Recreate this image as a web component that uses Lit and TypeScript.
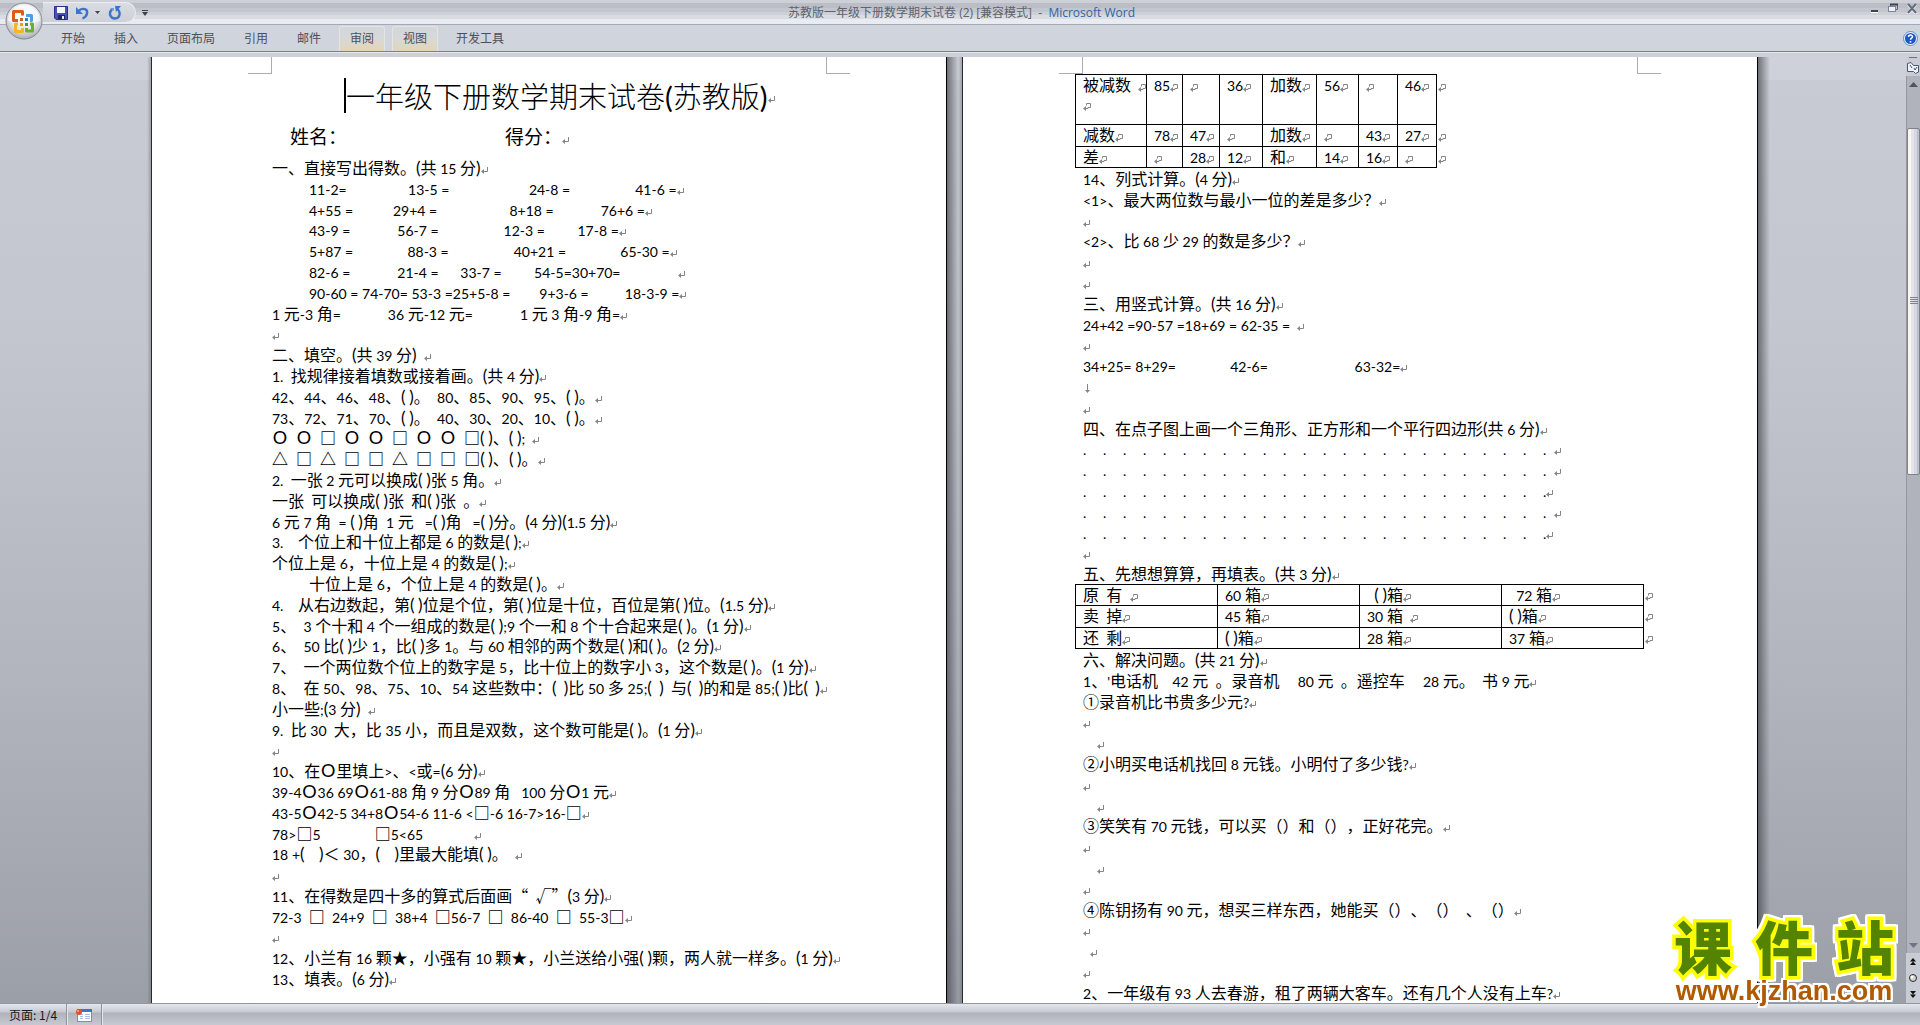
import { LitElement, html, svg, css, TemplateResult } from "lit";
import { customElement, property } from "lit/decorators.js";
import { classMap } from "lit/directives/class-map.js";

/* ---------- text helpers ---------- */

const paraMark = html`<svg class="mark" width="8" height="8" viewBox="0 0 8 8" aria-hidden="true">
  <path d="M6.500 0V4.500H1.500" fill="none" stroke="#858585" />
  <path d="M0 4.500L3 2V7Z" fill="#858585" />
</svg>`;

const cellMark = html`<svg class="mark" width="8" height="8" viewBox="0 0 8 8" aria-hidden="true">
  <path d="M3.500 2.500V.5H7.500V4.500H5V5.500H2" fill="none" stroke="#858585" />
  <path d="M0 5.500L3 3V8Z" fill="#858585" />
</svg>`;

const breakMark = html`<svg class="mark" width="8" height="10" viewBox="0 0 8 10" aria-hidden="true">
  <path d="M4.500 0V7" fill="none" stroke="#858585" />
  <path d="M2 6H7L4.500 9Z" fill="#858585" />
</svg>`;

/* Splits a string into Latin, bracket, shape, blank and ideographic runs, each with its own face. */
function runs(text: string): TemplateResult[] {
  const parts = text.match(/[()]+|[\x21-\x27\x2a-\x7e]+| +|○|[□△]+|[^\x20-\x7e○□△]+/g) ?? [];
  return parts.map((part) => {
    if (part === "○") return html`<span class="ring">O</span>`;
    if (part[0] === "□" || part[0] === "△") return html`<span class="shape">${part}</span>`;
    if (part[0] === " ") return html`<span class="sp">${part}</span>`;
    if (part[0] === "(" || part[0] === ")") return html`<span class="par">${part}</span>`;
    if (part.charCodeAt(0) < 127) return html`<span class="lat">${part}</span>`;
    return html`${part}`;
  });
}

const textStyles = css`
  .lat,
  .par {
    font-family: Lato, "Liberation Sans", sans-serif;
    font-size: 14px;
    font-weight: 400;
    line-height: 1;
  }
  .par {
    font-size: 17px;
  }
  .sp {
    font-family: "Liberation Sans", sans-serif;
    font-size: 13px;
    line-height: 1;
  }
  .shape {
    font-weight: 700;
  }
  .ring {
    display: inline-block;
    width: 16px;
    font-family: Lato, sans-serif;
    font-size: 18px;
    line-height: 1;
    text-align: center;
  }
  .mark {
    vertical-align: -1px;
  }
`;

/* ---------- one paragraph ---------- */

@customElement("doc-line")
class DocLine extends LitElement {
  @property() text = "";
  @property({ type: Boolean }) indent = false;
  @property({ type: Boolean, attribute: "soft-break" }) softBreak = false;
  @property({ attribute: false }) shapes: string[] = [];

  static styles = [
    textStyles,
    css`
      :host {
        display: block;
      }
      .line {
        margin: 0;
        height: 1.3em;
        line-height: 1.3;
        white-space: pre;
      }
      .indent {
        padding-left: 37px;
      }
      .shapes {
        display: flex;
        gap: 8px;
      }
    `,
  ];

  render() {
    if (this.shapes.length) {
      return html`<p class="line shapes">
        ${this.shapes.map((s, i) => html`<span>${runs(s)}${i === this.shapes.length - 1 ? paraMark : ""}</span>`)}
      </p>`;
    }
    return html`<p class=${classMap({ line: true, indent: this.indent })}>${runs(this.text)}${this.softBreak ? breakMark : paraMark}</p>`;
  }
}

@customElement("dot-row")
class DotRow extends LitElement {
  @property({ type: Boolean }) spaced = false;

  static styles = [
    textStyles,
    css`
      :host {
        display: block;
      }
      .dots {
        display: flex;
        gap: 16px;
        height: 1.3em;
        margin: 0;
        line-height: 1.3;
        white-space: pre;
      }
      .dot {
        flex: 0 0 4px;
      }
    `,
  ];

  render() {
    const tail = this.spaced ? "  " : "";
    return html`<p class="dots">
      ${Array.from({ length: 24 }, (_, i) => html`<span class="dot"><span class="lat">.</span>${i === 23 ? html`${runs(tail)}${paraMark}` : ""}</span>`)}
    </p>`;
  }
}

/* ---------- tables ---------- */

@customElement("doc-table")
class DocTable extends LitElement {
  @property({ attribute: false }) rows: string[][] = [];
  @property() kind = "wide";

  static styles = [
    textStyles,
    css`
      :host {
        display: block;
        margin-left: -8px;
      }
      table {
        border-collapse: collapse;
        table-layout: fixed;
      }
      td {
        box-sizing: border-box;
        height: 21px;
        padding: 0 0 0 7px;
        border: 1px solid #000;
        line-height: 19px;
        vertical-align: top;
        white-space: pre;
      }
      td.end {
        width: 16px;
        padding-left: 1px;
        border: 0;
      }
      .wide {
        width: 584px;
      }
      .sums {
        width: 377px;
      }
      .sums tr:first-child td {
        height: 50px;
      }
      tr:nth-child(2) td {
        height: 22px;
      }
      .row-break {
        display: block;
      }
      .w71 { width: 71px; }
      .w36 { width: 36px; }
      .w37 { width: 37px; }
      .w43 { width: 43px; }
      .w54 { width: 54px; }
      .w42 { width: 42px; }
      .w39 { width: 39px; }
      .w142 { width: 142px; }
    `,
  ];

  render() {
    const widths = this.kind === "sums" ? [71, 36, 37, 43, 54, 42, 39, 39] : [142, 142, 142, 142];
    return html`<table class=${this.kind}>
      <tbody>
        ${this.rows.map(
          (row) => html`<tr>
            ${row.map((cell, i) => html`<td class="w${widths[i]}">${cell.split("\n").map((t) => html`<span class="row-break">${runs(t)}${cellMark}</span>`)}</td>`)}
            <td class="end">${cellMark}</td>
          </tr>`
        )}
      </tbody>
    </table>`;
  }
}

/* ---------- content ---------- */

type Line = string | { text?: string; indent?: boolean; softBreak?: boolean; shapes?: string[] };

const pageOne: Line[] = [
  "一、直接写出得数。(共 15 分)",
  { indent: true, text: "11-2=                 13-5 =                      24-8 =                  41-6 =" },
  { indent: true, text: "4+55 =           29+4 =                    8+18 =             76+6 =" },
  { indent: true, text: "43-9 =             56-7 =                  12-3 =         17-8 =" },
  { indent: true, text: "5+87 =               88-3 =                  40+21 =               65-30 =" },
  { indent: true, text: "82-6 =             21-4 =      33-7 =         54-5=30+70=                " },
  { indent: true, text: "90-60 = 74-70= 53-3 =25+5-8 =        9+3-6 =          18-3-9 =" },
  "1 元-3 角=             36 元-12 元=             1 元 3 角-9 角=",
  "",
  "二、填空。(共 39 分)  ",
  "1.  找规律接着填数或接着画。(共 4 分)",
  "42、44、46、48、( )。  80、85、90、95、( )。",
  "73、72、71、70、( )。  40、30、20、10、( )。",
  { shapes: ["○", "○", "□", "○", "○", "□", "○", "○", "□( )、( );  "] },
  { shapes: ["△", "□", "△", "□", "□", "△", "□", "□", "□( )、( )。"] },
  "2.  一张 2 元可以换成( )张 5 角。",
  "一张  可以换成( )张  和( )张  。",
  "6 元 7 角  = ( )角  1 元   =( )角   =( )分。(4 分)(1.5 分)",
  "3.    个位上和十位上都是 6 的数是( );",
  "个位上是 6，十位上是 4 的数是( );",
  { indent: true, text: "十位上是 6，个位上是 4 的数是( )。" },
  "4.    从右边数起，第( )位是个位，第( )位是十位，百位是第( )位。(1.5 分)",
  "5、  3 个十和 4 个一组成的数是( );9 个一和 8 个十合起来是( )。(1 分)",
  "6、  50 比( )少 1，比( )多 1。与 60 相邻的两个数是( )和( )。(2 分)",
  "7、  一个两位数个位上的数字是 5，比十位上的数字小 3，这个数是( )。(1 分)",
  "8、  在 50、98、75、10、54 这些数中：(  )比 50 多 25;(  )  与(  )的和是 85;( )比(  )",
  "小一些;(3 分)  ",
  "9.  比 30  大，比 35 小，而且是双数，这个数可能是( )。(1 分)",
  "",
  "10、在○里填上>、<或=(6 分)",
  "39-4○36 69○61-88 角 9 分○89 角   100 分○1 元",
  "43-5○42-5 34+8○54-6 11-6 <□-6 16-7>16-□",
  "78>□5               □5<65              ",
  "18 +(    )＜ 30，(    )里最大能填( )。  ",
  "",
  "11、在得数是四十多的算式后面画“  √”(3 分)",
  "72-3  □  24+9  □  38+4  □56-7  □  86-40  □  55-3□",
  "",
  "12、小兰有 16 颗★，小强有 10 颗★，小兰送给小强( )颗，两人就一样多。(1 分)",
  "13、填表。(6 分)",
];

const sumsTable = [
  ["被减数  \n", "85", "", "36", "加数", "56", "", "46"],
  ["减数", "78", "47", "", "加数", "", "43", "27"],
  ["差", "", "28", "12", "和", "14", "16", ""],
];

const pageTwoTop: Line[] = [
  "14、列式计算。(4 分)",
  "<1>、最大两位数与最小一位的差是多少？",
  "",
  "<2>、比 68 少 29 的数是多少？",
  "",
  "",
  "三、用竖式计算。(共 16 分)",
  "24+42 =90-57 =18+69 = 62-35 =  ",
  "",
  "34+25= 8+29=               42-6=                        63-32=",
  { softBreak: true },
  "",
  "四、在点子图上画一个三角形、正方形和一个平行四边形(共 6 分)",
];

const dotRows = [true, true, false, true, false];

const pageTwoMiddle: Line[] = ["", "五、先想想算算，再填表。(共 3 分)"];

const boxTable = [
  ["原  有  ", "60 箱", "  ( )箱", "  72 箱"],
  ["卖  掉", "45 箱", "30 箱  ", "( )箱"],
  ["还  剩", "( )箱", "28 箱", "37 箱"],
];

const pageTwoBottom: Line[] = [
  "六、解决问题。(共 21 分)",
  "1、'电话机    42 元  。录音机     80 元  。遥控车     28 元。  书 9 元",
  "①录音机比书贵多少元?",
  "",
  "    ",
  "②小明买电话机找回 8 元钱。小明付了多少钱?",
  "",
  "    ",
  "③笑笑有 70 元钱，可以买（）和（），正好花完。",
  "",
  "    ",
  "",
  "④陈钥扬有 90 元，想买三样东西，她能买（）、（）  、（）",
  "",
  "  ",
  "",
  "2、一年级有 93 人去春游，租了两辆大客车。还有几个人没有上车?",
];

const tabs = ["开始", "插入", "页面布局", "引用", "邮件", "审阅", "视图", "开发工具"];
const litTabs = new Set(["审阅", "视图"]);

/* ---------- icons ---------- */

const petal = (d: string, color: string) => svg`<path d=${d} fill="none" stroke=${color} stroke-width="3" stroke-linejoin="round" />`;

const officeLogo = html`<svg width="38" height="38" viewBox="0 0 38 38" aria-hidden="true">
  <defs>
    <radialGradient id="orb" cx="50%" cy="35%" r="65%">
      <stop offset="0" stop-color="#fff" />
      <stop offset=".6" stop-color="#e6e8ec" />
      <stop offset="1" stop-color="#a9adb5" />
    </radialGradient>
  </defs>
  <circle cx="19" cy="19" r="18" fill="url(#orb)" stroke="#85888f" />
  <path d="M3 19a16 16 0 0 1 32 0c-8 3-24 3-32 0z" fill="#fff" opacity=".55" />
  ${petal("M13 18.500H8.500V9.500H17.500V13.500", "#dc5a1a")}
  ${petal("M21 13.500H26.500V18.500H25", "#4f9fe0")}
  ${petal("M13 22H10.500V29.500H17.500V26", "#f3b722")}
  ${petal("M25 22H27.500V29H21.500V26", "#6fae2c")}
  <rect x="15" y="16" width="3" height="3" fill="#dc5a1a" />
  <rect x="20" y="16" width="3" height="3" fill="#2f7fd0" />
  <rect x="15" y="21" width="3" height="3" fill="#e8a410" />
  <rect x="20" y="21" width="3" height="3" fill="#4f9420" />
</svg>`;

const saveIcon = html`<svg width="14" height="14" viewBox="0 0 14 14" aria-hidden="true">
  <path d="M.5.5H13.500V13.500H2L.5 12Z" fill="#4a50b4" stroke="#2c2f86" />
  <rect x="3" y="1" width="8" height="6" fill="#f4f6fb" />
  <rect x="4" y="9" width="7" height="4.500" fill="#23265c" />
  <rect x="8" y="10" width="2" height="3" fill="#e8eaf5" />
</svg>`;

const undoIcon = html`<svg width="14" height="14" viewBox="0 0 14 14" aria-hidden="true">
  <path d="M3 4.500C7 1.500 12 3 11 7.500C10.500 10 9 11.500 6.500 12.500" fill="none" stroke="#3b74c8" stroke-width="2.400" />
  <path d="M0 1V8H7Z" fill="#3b74c8" />
</svg>`;

const redoIcon = html`<svg width="14" height="14" viewBox="0 0 14 14" aria-hidden="true">
  <path d="M4 3.500C0 7 2.500 12.500 7 12.500C12 12.500 13 6.500 9.500 3" fill="none" stroke="#3b74c8" stroke-width="2.400" />
  <path d="M7 0H13L8 6Z" fill="#3b74c8" />
  <path d="M2 2H6V5Z" fill="#6b9be0" />
</svg>`;

const macroIcon = html`<svg width="16" height="14" viewBox="0 0 16 14" aria-hidden="true">
  <rect x="1.500" y="1.500" width="14" height="12" fill="#fff" stroke="#6f8fcb" />
  <rect x="1" y="1" width="15" height="3" fill="#3f70d0" />
  <path d="M4 6.500H7M9 6.500H14M4 8.500H7M9 8.500H14M4 10.500H7M9 10.500H14" stroke="#a9c0ea" />
  <circle cx="3" cy="4" r="3" fill="#d9532c" />
  <circle cx="2" cy="3" r="1" fill="#f6a88c" />
</svg>`;

/* ---------- application ---------- */

@customElement("app-root")
class AppRoot extends LitElement {
  static styles = [
    textStyles,
    css`
      :host {
        display: flex;
        flex-direction: column;
        height: 100vh;
        overflow: hidden;
        position: relative;
        box-sizing: border-box;
        background: #cdd0d8;
        color: #000;
        font-family: "Noto Sans CJK SC", sans-serif;
        font-size: 16px;
        font-weight: 400;
        text-spacing-trim: space-all;
      }
      button {
        display: flex;
        align-items: center;
        justify-content: center;
        margin: 0;
        padding: 0;
        border: 0;
        background: none;
        color: inherit;
        font: inherit;
      }
      .titlebar {
        display: flex;
        align-items: flex-start;
        flex: none;
        height: 24px;
        border-bottom: 1px solid #a6a9b5;
        background: linear-gradient(#cdd0d7 0 3px, #bbbec6 3px 8px, #c3c6cd 8px 12px, #cdd0d6 12px 15px, #d9dce1 15px 19px, #e8ebf2 19px);
      }
      .quick {
        display: flex;
        align-items: center;
        gap: 8px;
        box-sizing: border-box;
        height: 21px;
        margin: 2px 0 0 43px;
        padding: 0 13px 0 11px;
        border: 1px solid #eceef2;
        border-left: 0;
        border-radius: 0 11px 11px 0;
        background: linear-gradient(#d9dce2, #cdd0d8);
      }
      .undo {
        gap: 5px;
      }
      .more {
        margin: 10px 0 0 6px;
      }
      .caption {
        flex: 1;
        padding-right: 96px;
        color: #5d626d;
        font-family: "Open Sans", "Noto Sans CJK SC", sans-serif;
        font-size: 12px;
        line-height: 25px;
        text-align: center;
        white-space: pre;
      }
      .app-name {
        color: #2f65a8;
      }
      .window-buttons {
        display: flex;
        gap: 9px;
        padding: 3px 3px 0 0;
      }
      .ribbon {
        display: flex;
        align-items: center;
        gap: 7px;
        flex: none;
        box-sizing: border-box;
        height: 27px;
        padding: 0 2px 0 50px;
        border-bottom: 1px solid #7c7f85;
        background: #d0d4dc;
      }
      .tab {
        height: 25px;
        box-sizing: border-box;
        padding: 0 10px 2px;
        border: 1px solid transparent;
        border-bottom: 0;
        border-radius: 3px 3px 0 0;
        color: #4b4f59;
        font-size: 12px;
      }
      .tab.lit {
        border-color: #e2e4e8;
        background: linear-gradient(#d3d6dc, #d8d8d6 50%, #e3d6b6);
      }
      .help {
        margin-left: auto;
      }
      .edge {
        flex: none;
        height: 4px;
        border-top: 1px solid #e6e9ed;
        background: #cdd0d8;
      }
      .office {
        position: absolute;
        left: 5px;
        top: 2px;
        z-index: 2;
      }
      .workspace {
        display: flex;
        flex: 1;
        min-height: 0;
      }
      .canvas {
        display: flex;
        justify-content: center;
        gap: 15px;
        flex: 1;
        min-width: 0;
        padding-left: 3px;
        overflow: hidden;
        background: linear-gradient(#ced1d9 0 23px, #c8cbd3 23px, #c3c6ce 30%, #b2b5be 65%, #9b9fa8);
      }
      .sheet {
        position: relative;
        box-sizing: border-box;
        flex: none;
        width: 796px;
        padding: 17px 120px 0;
        border: solid #000;
        border-width: 0 1px;
        background: #fff;
      }
      .sheet::before {
        content: "";
        position: absolute;
        top: 0;
        right: 100%;
        bottom: 0;
        width: 5px;
        background: linear-gradient(to left, rgba(90, 93, 102, 0.5), transparent);
      }
      .sheet::after {
        content: "";
        position: absolute;
        top: 0;
        left: 100%;
        bottom: 0;
        width: 12px;
        margin-left: 1px;
        background: linear-gradient(to right, rgba(70, 72, 78, 0.7), transparent);
      }
      .corner {
        position: absolute;
        top: 0;
        width: 23px;
        height: 16px;
        border: solid #a9abb8;
        border-width: 0 0 1px;
      }
      .corner.left {
        left: 96px;
        border-right-width: 1px;
      }
      .corner.right {
        right: 96px;
        border-left-width: 1px;
      }
      .title {
        display: flex;
        align-items: center;
        margin: 0;
        padding-left: 72px;
        font-size: 29px;
        font-weight: 300;
        line-height: 42px;
        white-space: pre;
      }
      .title .par {
        font-size: 29px;
      }
      .title .mark {
        align-self: flex-end;
        margin-bottom: 12px;
      }
      .caret {
        width: 2px;
        height: 35px;
        background: #000;
      }
      .names {
        display: flex;
        gap: 158px;
        margin: 0 0 1px;
        padding-left: 18px;
        font-size: 19px;
        line-height: 40px;
      }
      .rail {
        display: flex;
        flex-direction: column;
        align-items: center;
        flex: none;
        box-sizing: border-box;
        width: 14px;
        background: #c9ccd4;
      }
      .ruler {
        height: 19px;
      }
      .track {
        display: flex;
        flex-direction: column;
        align-items: center;
        flex: 1;
        box-sizing: border-box;
        width: 14px;
        padding: 5px 0;
        border-left: 1px solid #94979f;
        background: #b0b3bc;
      }
      .arrow {
        height: 6px;
      }
      .thumb {
        display: flex;
        align-items: center;
        justify-content: center;
        box-sizing: border-box;
        flex: 0 0 40%;
        width: 13px;
        margin: 41px 0 auto;
        border: 1px solid #7f828a;
        border-radius: 2px;
        background: linear-gradient(to right, #fbf7ee 0 3px, #e3e4ec 3px 6px, #d5d8e2 6px 9px, #bcc0cb 9px);
      }
      .nav {
        display: flex;
        flex-direction: column;
        align-items: center;
        gap: 8px;
        padding: 5px 0;
      }
      .status {
        display: flex;
        flex: none;
        height: 21px;
        border-top: 1px solid #94969d;
        background: linear-gradient(#e3e6eb, #c9ccd4 35%, #b0b3bb 45%, #c6c9d1);
        color: #16181c;
        font-size: 12px;
        line-height: 21px;
      }
      .status-item {
        padding: 0 9px;
        border-right: 1px solid #90939b;
        box-shadow: 1px 0 #e4e6ea;
      }
      .brand {
        position: absolute;
        right: 26px;
        bottom: 20px;
        z-index: 3;
        display: flex;
        flex-direction: column;
        align-items: center;
        filter: drop-shadow(2px 0 0 #fff) drop-shadow(-2px 0 0 #fff) drop-shadow(0 2px 0 #fff) drop-shadow(0 -2px 0 #fff);
      }
      .brand-name {
        display: flex;
        gap: 23px;
        color: #548300;
        font-family: "Liberation Sans", "Noto Sans CJK SC", sans-serif;
        font-size: 58px;
        font-weight: 900;
        line-height: 56px;
        -webkit-text-stroke: 7px #ffff00;
        paint-order: stroke fill;
      }
      .brand-link {
        color: #b05a00;
        font-family: "Liberation Sans", sans-serif;
        font-size: 27px;
        font-weight: 700;
        line-height: 27px;
        text-decoration: none;
      }
    `,
  ];

  private lines(list: Line[]) {
    return list.map((line) => {
      const l = typeof line === "string" ? { text: line } : line;
      return html`<doc-line .text=${l.text ?? ""} .indent=${l.indent ?? false} .softBreak=${l.softBreak ?? false} .shapes=${l.shapes ?? []}></doc-line>`;
    });
  }

  render() {
    return html`
      <header class="titlebar">
        <div class="quick">
          <button aria-label="保存">${saveIcon}</button>
          <button class="undo" aria-label="撤消">
            ${undoIcon}
            <svg width="5" height="3" viewBox="0 0 5 3" aria-hidden="true"><path d="M0 0H5L2.500 3Z" fill="#3f434b" /></svg>
          </button>
          <button aria-label="重复">${redoIcon}</button>
        </div>
        <button class="more" aria-label="自定义">
          <svg width="6" height="6" viewBox="0 0 6 6" aria-hidden="true"><path d="M0 .5H6" stroke="#3f434b" /><path d="M0 2H6L3 6Z" fill="#3f434b" /></svg>
        </button>
        <div class="caption">苏教版一年级下册数学期末试卷 (2) [兼容模式]  -  <span class="app-name">Microsoft Word</span></div>
        <div class="window-buttons">
          <button aria-label="最小化">
            <svg width="8" height="11" viewBox="0 0 8 11" aria-hidden="true"><path d="M0 8H7" stroke="#3f434b" stroke-width="2" /><path d="M0 9.500H7" stroke="#fff" /></svg>
          </button>
          <button aria-label="还原">
            <svg width="10" height="11" viewBox="0 0 10 11" aria-hidden="true"><path d="M2.500 4V1.500H9.500V6.500H8" fill="none" stroke="#5f6880" /><path d="M2 1.500H10" stroke="#3f434b" stroke-width="2" /><rect x=".5" y="3.500" width="7" height="5" fill="#eef0f5" stroke="#7a859f" /></svg>
          </button>
          <button aria-label="关闭">
            <svg width="10" height="11" viewBox="0 0 10 11" aria-hidden="true"><path d="M1 2L9 11M9 2L1 11" stroke="#fff" stroke-width="2" /><path d="M1 1L9 10M9 1L1 10" stroke="#636b7e" stroke-width="2" /></svg>
          </button>
        </div>
      </header>
      <button class="office" aria-label="Office">${officeLogo}</button>
      <nav class="ribbon">
        ${tabs.map((t) => html`<button class=${classMap({ tab: true, lit: litTabs.has(t) })}>${t}</button>`)}
        <button class="help" aria-label="帮助">
          <svg width="15" height="15" viewBox="0 0 15 15" aria-hidden="true">
            <circle cx="7.500" cy="7.500" r="7" fill="#e9f1fc" stroke="#5f8ed0" />
            <circle cx="7.500" cy="7.500" r="5.500" fill="#1f55c4" />
            <path d="M5.500 6C5.500 3.500 9.500 3.500 9.500 5.800C9.500 7.200 7.500 7.200 7.500 8.800" fill="none" stroke="#fff" stroke-width="1.500" />
            <rect x="6.700" y="10" width="1.600" height="1.600" fill="#fff" />
          </svg>
        </button>
      </nav>
      <div class="edge"></div>
      <div class="workspace">
        <main class="canvas">
          <article class="sheet">
            <i class="corner left"></i><i class="corner right"></i>
            <h1 class="title"><span class="caret"></span><span>${runs("一年级下册数学期末试卷(苏教版)")}</span>${paraMark}</h1>
            <p class="names"><span>姓名：</span><span>得分：${paraMark}</span></p>
            ${this.lines(pageOne)}
          </article>
          <article class="sheet">
            <i class="corner left"></i><i class="corner right"></i>
            <doc-table kind="sums" .rows=${sumsTable}></doc-table>
            ${this.lines(pageTwoTop)}
            ${dotRows.map((spaced) => html`<dot-row .spaced=${spaced}></dot-row>`)}
            ${this.lines(pageTwoMiddle)}
            <doc-table kind="wide" .rows=${boxTable}></doc-table>
            ${this.lines(pageTwoBottom)}
          </article>
        </main>
        <aside class="rail">
          <button class="ruler" aria-label="标尺">
            <svg width="14" height="19" viewBox="0 0 14 19" aria-hidden="true">
              <rect x="3" y="0" width="8" height="1" fill="#6b6e75" />
              <path d="M1.500 6.500L5 5.500L7.500 8.500H12.500V15L9.500 16.500L7.500 14.500H1.500Z" fill="#eef1f6" stroke="#4a5872" />
              <path d="M4 8L6 11M8 11L9 13L11 10" fill="none" stroke="#4a5872" />
            </svg>
          </button>
          <div class="track">
            <button class="arrow" aria-label="向上"><svg width="9" height="5" viewBox="0 0 9 5"><path d="M0 5H9L4.500 0Z" fill="#4e5564" /></svg></button>
            <div class="thumb">
              <svg width="8" height="8" viewBox="0 0 8 8" aria-hidden="true"><path d="M0 .5H8M0 2.500H8M0 4.500H8M0 6.500H8" stroke="#7d818b" /></svg>
            </div>
            <button class="arrow" aria-label="向下"><svg width="9" height="5" viewBox="0 0 9 5"><path d="M0 0H9L4.500 5Z" fill="#6b7488" /></svg></button>
          </div>
          <div class="nav">
            <button aria-label="上一页"><svg width="6" height="8" viewBox="0 0 6 8"><path d="M0 3.500L3 0L6 3.500ZM0 7L3 3.500L6 7Z" fill="#111" /></svg></button>
            <button aria-label="浏览对象"><svg width="8" height="8" viewBox="0 0 8 8"><circle cx="4" cy="4" r="3.500" fill="#d2d2cc" stroke="#26282c" /><circle cx="3" cy="3" r="1.500" fill="#fff" /></svg></button>
            <button aria-label="下一页"><svg width="6" height="8" viewBox="0 0 6 8"><path d="M0 1L3 4.500L6 1ZM0 4.500L3 8L6 4.500Z" fill="#111" /></svg></button>
          </div>
        </aside>
      </div>
      <footer class="status">
        <button class="status-item">页面: 1/4</button>
        <button class="status-item" aria-label="宏">${macroIcon}</button>
      </footer>
      <div class="brand">
        <div class="brand-name"><span>课</span><span>件</span><span>站</span></div>
        <a class="brand-link" href="#">www.kjzhan.com</a>
      </div>
    `;
  }
}
